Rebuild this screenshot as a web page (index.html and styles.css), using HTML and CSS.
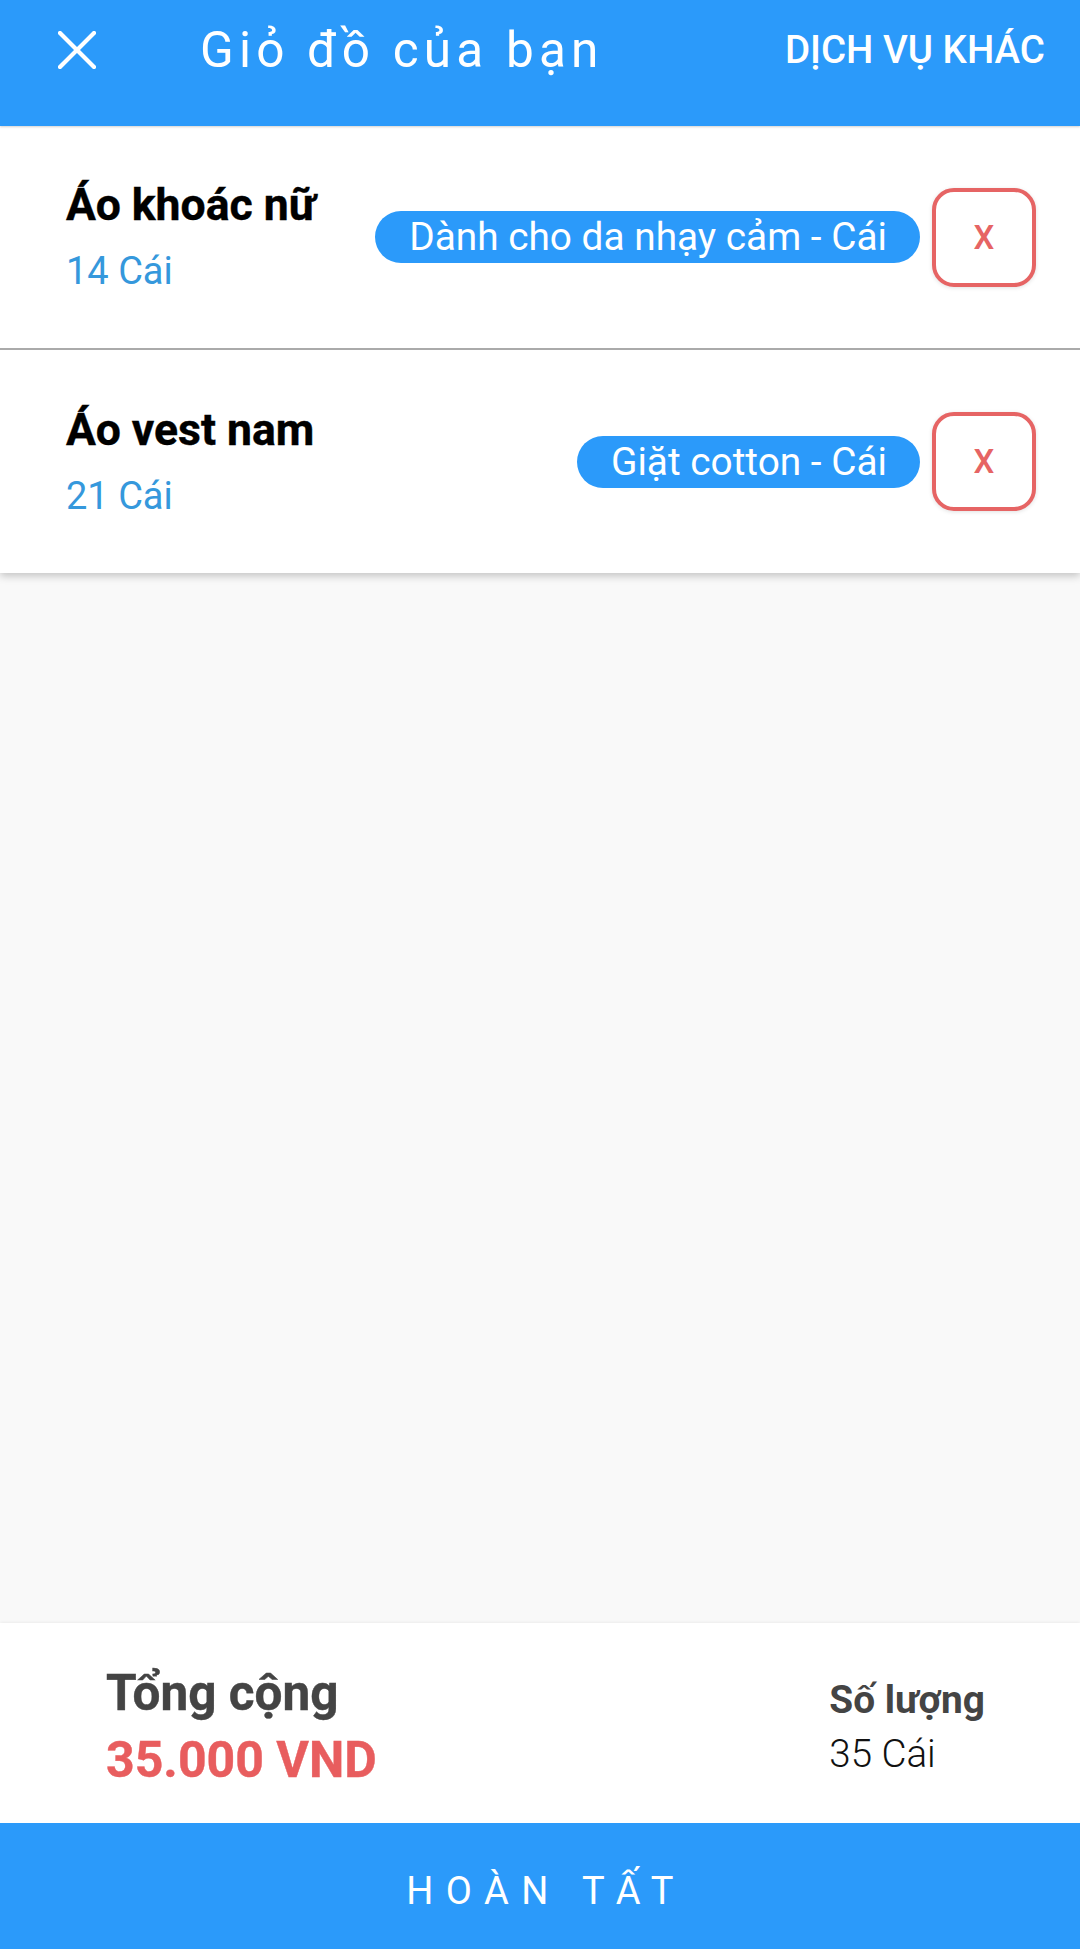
FILE: index.html
```html
<!DOCTYPE html>
<html lang="vi">
<head>
<meta charset="utf-8">
<title>Giỏ đồ của bạn</title>
<link rel="stylesheet" href="styles.css">
</head>
<body>
<div class="app">
  <header class="topbar">
    <button class="close-btn" aria-label="Đóng">
      <svg width="38" height="38" viewBox="0 0 38 38"><path d="M2 2 L36 36 M36 2 L2 36" stroke="#fff" stroke-width="4.2" stroke-linecap="square" fill="none"/></svg>
    </button>
    <h1 class="title">Giỏ đồ của bạn</h1>
    <span class="other">DỊCH VỤ KHÁC</span>
  </header>

  <section class="cart">
    <div class="item item-first">
      <div class="item-info">
        <div class="item-name">Áo khoác nữ</div>
        <div class="item-qty">14 Cái</div>
      </div>
      <span class="pill">Dành cho da nhạy cảm - Cái</span>
      <button class="remove">X</button>
    </div>
    <div class="item">
      <div class="item-info">
        <div class="item-name">Áo vest nam</div>
        <div class="item-qty">21 Cái</div>
      </div>
      <span class="pill">Giặt cotton - Cái</span>
      <button class="remove">X</button>
    </div>
  </section>

  <div class="spacer"></div>

  <section class="summary">
    <div class="total">
      <div class="total-label">Tổng cộng</div>
      <div class="total-value">35.000 VND</div>
    </div>
    <div class="count">
      <div class="count-label">Số lượng</div>
      <div class="count-value">35 Cái</div>
    </div>
  </section>

  <button class="finish">HOÀN TẤT</button>
</div>
</body>
</html>
```

FILE: styles.css
```css
* { box-sizing: border-box; }
html, body { margin: 0; padding: 0; }
body {
  width: 1080px;
  height: 1949px;
  background: #f9f9f9;
  font-family: Roboto, "Noto Sans", sans-serif;
  overflow: hidden;
}
.app {
  display: flex;
  flex-direction: column;
  height: 1949px;
}
.topbar {
  position: relative;
  z-index: 2;
  height: 126px;
  flex: none;
  background: #2b9afa;
  display: flex;
  align-items: center;
  padding: 0 35px 26px 58px;
  box-shadow: 0 1px 2px rgba(0, 0, 0, 0.18);
}
.close-btn {
  background: none;
  border: 0;
  padding: 0;
  width: 38px;
  height: 38px;
  display: flex;
}
.title {
  margin: 0 0 0 104px;
  flex: 1;
  font-weight: 400;
  font-size: 49.5px;
  letter-spacing: 5.2px;
  color: #fff;
  line-height: 58px;
}
.other {
  color: #fff;
  font-weight: 500;
  font-size: 38.5px;
  line-height: 44px;
}
.cart {
  flex: none;
  background: #fff;
  box-shadow: 0 3px 8px rgba(0, 0, 0, 0.22);
  position: relative;
  z-index: 1;
}
.item {
  height: 223px;
  display: flex;
  align-items: center;
  padding: 0 44px 0 66px;
}
.item-first {
  height: 224px;
  border-bottom: 2px solid #aaaaaa;
}
.item-info {
  flex: 1;
  display: flex;
  flex-direction: column;
  gap: 16px;
}
.item-name {
  font-weight: 700;
  font-size: 44.5px;
  line-height: 52px;
  color: #000;
  -webkit-text-stroke: 0.4px #000;
}
.item-qty {
  font-size: 38px;
  line-height: 48px;
  color: #3598dc;
}
.pill {
  background: #2b9afa;
  color: #fff;
  font-size: 38.8px;
  height: 52px;
  line-height: 52px;
  padding: 0 33px 0 34px;
  border-radius: 26px;
  white-space: nowrap;
}
.remove {
  margin-left: 12px;
  width: 104px;
  height: 99px;
  border: 4.5px solid #e66464;
  border-radius: 22px;
  background: #fff;
  color: #e66464;
  font-family: Roboto, sans-serif;
  font-weight: 500;
  font-size: 33px;
  box-shadow: 0 1px 4px rgba(0, 0, 0, 0.12);
  padding: 0;
}
.spacer { flex: 1; }
.summary {
  flex: none;
  height: 200px;
  background: #fff;
  box-shadow: 0 -1px 3px rgba(0, 0, 0, 0.06);
  display: flex;
  justify-content: space-between;
  align-items: flex-start;
  padding: 37px 95px 0 106px;
}
.total-label {
  font-weight: 700;
  font-size: 49.5px;
  line-height: 67px;
  color: #444;
  -webkit-text-stroke: 0.4px #444;
}
.total-value {
  font-weight: 700;
  font-size: 50px;
  line-height: 67px;
  color: #e85d5e;
  -webkit-text-stroke: 0.4px #e85d5e;
}
.count { margin-top: 13px; }
.count-label {
  font-weight: 700;
  font-size: 38.8px;
  line-height: 54px;
  color: #444;
}
.count-value {
  font-weight: 300;
  font-size: 38.5px;
  line-height: 54px;
  color: #111;
}
.finish {
  flex: none;
  height: 126px;
  border: 0;
  background: #2b9afa;
  color: #fff;
  font-family: Roboto, sans-serif;
  font-weight: 400;
  font-size: 38px;
  letter-spacing: 12.5px;
  padding: 10px 0 0 12px;
  width: 100%;
}
```
